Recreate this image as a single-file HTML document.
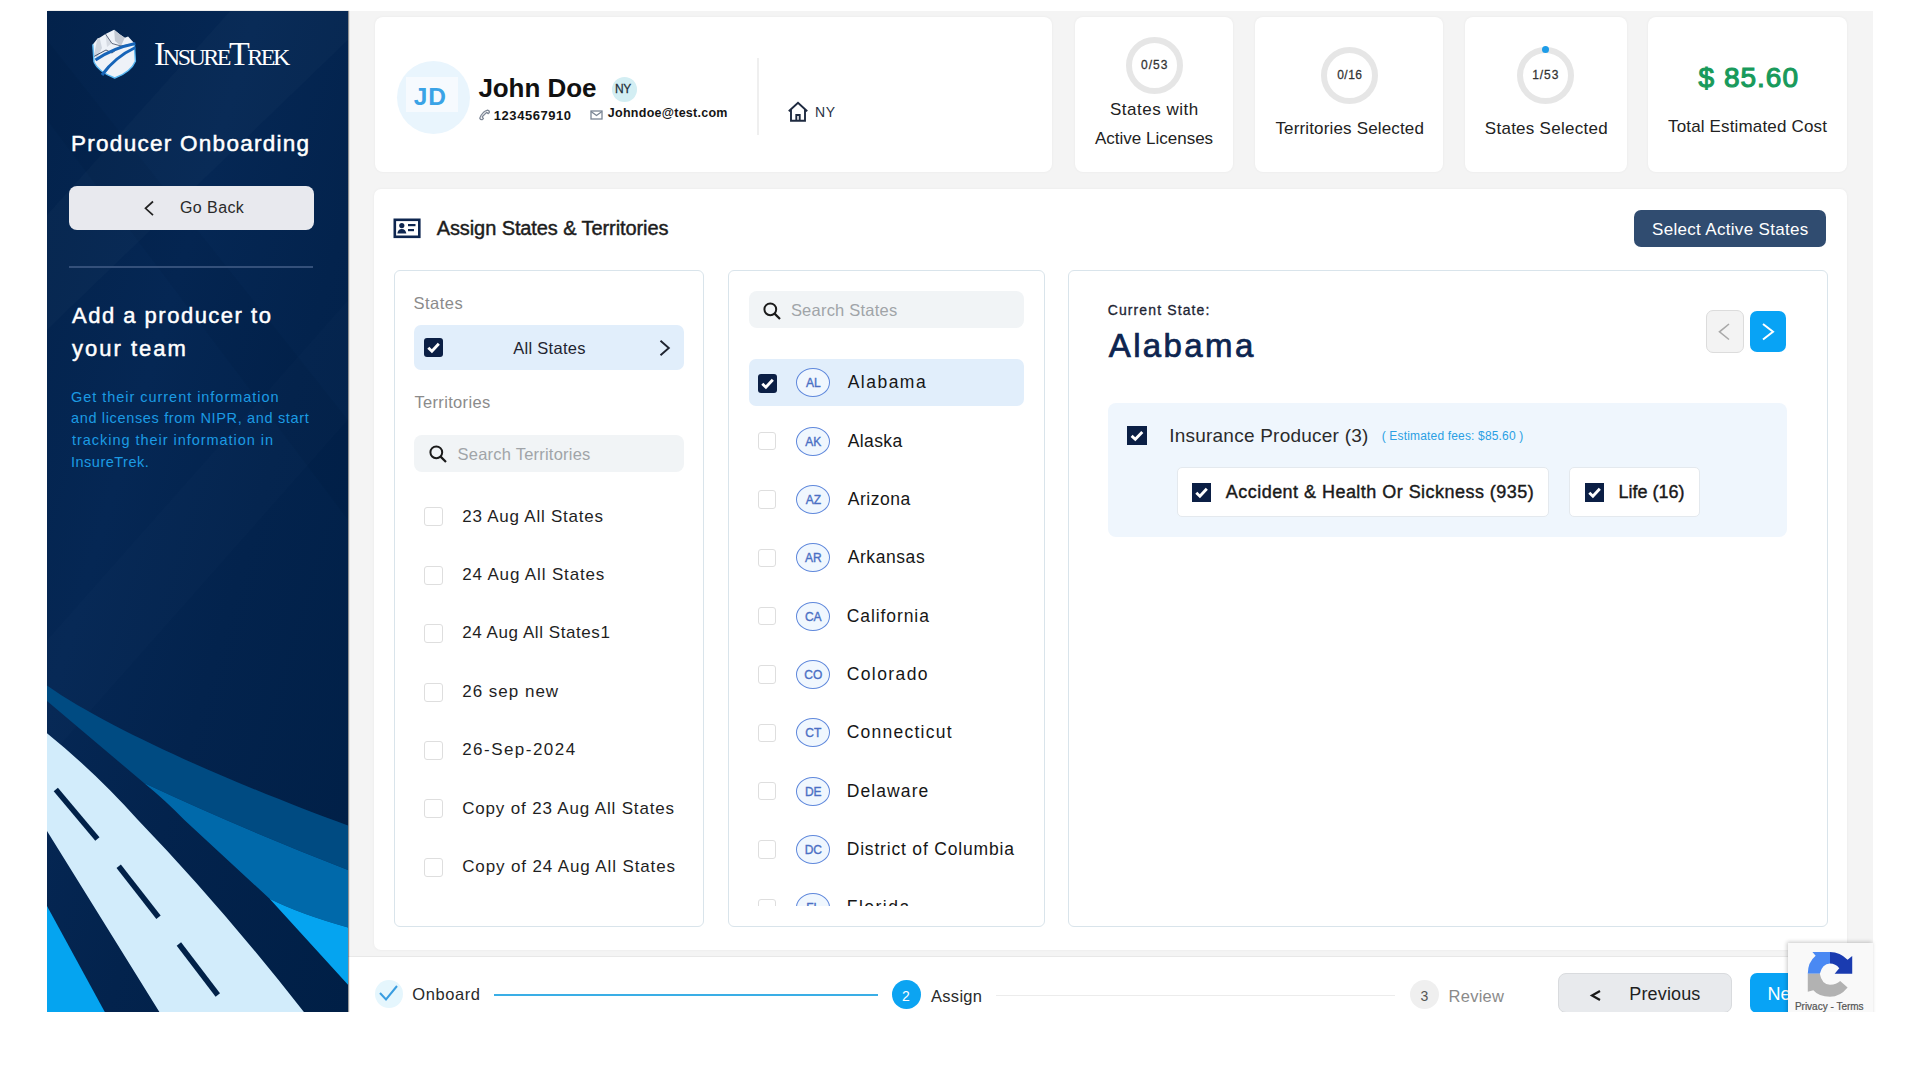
<!DOCTYPE html>
<html><head><meta charset="utf-8"><style>
*{box-sizing:border-box;margin:0;padding:0}
html,body{width:1920px;height:1080px;overflow:hidden;background:#fff;font-family:"Liberation Sans",sans-serif}
.abs{position:absolute}
.t{position:absolute;white-space:nowrap;line-height:1;font-family:"Liberation Sans",sans-serif}
#side{position:absolute;left:47px;top:11px;width:301px;height:1001px;background:#03234c;overflow:hidden;box-shadow:1px 0 1px rgba(0,0,0,0.4)}
#main{position:absolute;left:348px;top:11px;width:1525px;height:945px;background:#f4f4f4}
#foot{position:absolute;left:348px;top:956px;width:1525px;height:56px;background:#fff;border-top:1px solid #e8e8e8}
.card{position:absolute;background:#fff;border-radius:8px;box-shadow:0 0 3px rgba(0,0,0,0.05)}
.panel{position:absolute;background:#fff;border:1.5px solid #d9e4eb;border-radius:6px}
.cb{position:absolute;width:19px;height:19px;border:1.5px solid #dedede;border-radius:3px;background:#fff}
.cbk{position:absolute;width:19px;height:19px;border-radius:3px;background:#0b1f45}
.cbk svg{position:absolute;left:0;top:0}
.badge{position:absolute;width:34px;height:34px;border:1.2px solid #5f88dc;border-radius:50%;background:#f0f7fe;color:#4a6fc4;font-size:12px;font-weight:400;-webkit-text-stroke:0.35px #4a6fc4;text-align:center;line-height:31px;font-family:"Liberation Sans",sans-serif}
.row-sel{position:absolute;background:#e1eefb;border-radius:7px}
.search{position:absolute;background:#f1f4f6;border-radius:8px}
.ring{position:absolute;border-radius:50%;border:6px solid #e6e6e6}

</style></head><body>
<div id="main"></div>
<div id="foot"></div>
<div id="side">
  <svg class="abs" style="left:0;top:0" width="301" height="1001" viewBox="47 11 301 1001">
    <defs>
      <linearGradient id="sg" x1="0" y1="0" x2="1" y2="1">
        <stop offset="0" stop-color="#03224b"/>
        <stop offset="0.35" stop-color="#052754"/>
        <stop offset="0.6" stop-color="#03234d"/>
        <stop offset="1" stop-color="#001f46"/>
      </linearGradient>
    </defs>
    <rect x="47" y="11" width="301" height="1001" fill="url(#sg)"/>
    <path d="M230 11 L348 11 L348 40 L47 330 L47 215 Z" fill="#ffffff" opacity="0.018"/>
    <path d="M47 120 L47 40 L348 420 L348 520 Z" fill="#000000" opacity="0.03"/>
    <path d="M348 300 L348 420 L47 760 L47 640 Z" fill="#ffffff" opacity="0.012"/>
    
    
    <!-- band A -->
    <path d="M47 685.6 C117 735 258 792.6 348 825.6 L348 870 Q240 828 144 783 L47 701 Z" fill="#004b82"/>
    <!-- band B -->
    <path d="M144 783 Q240 828 348 870 L348 927.4 Q300 914 269.6 898.7 L184.4 820 Q165 800 144 783 Z" fill="#0069aa"/>
    <!-- band C -->
    <path d="M269.6 898.7 Q300 914 348 927.4 L348 984.8 Z" fill="#05a4f0"/>
    <!-- bottom-left bright triangle -->
    <path d="M47 906 L104.8 1012 L47 1012 Z" fill="#05a4f0"/>
    <!-- light road -->
    <path d="M47 733.3 Q95 772 138 820 Q220 905 303.9 1012 L159.4 1012 L47 831 Z" fill="#d2ecfb"/>
    <!-- dashes -->
    <g stroke="#012148" stroke-width="5.5">
      <line x1="55.8" y1="789.5" x2="97.4" y2="839"/>
      <line x1="118.7" y1="866.3" x2="158.5" y2="917.2"/>
      <line x1="178.9" y1="944" x2="217.8" y2="995"/>
    </g>
  </svg>
  <!-- logo -->
  <svg class="abs" style="left:38px;top:11px" width="60" height="60" viewBox="0 0 60 60">
    <path d="M7.8 22.4 L12.3 16.8 L14.6 15.7 L20.5 12 L29.1 7.8 L35 12.5 L39.8 15.7 L43.1 14.6 L49.3 21.3 L50.4 39.2 Q46 50 29.7 56 Q13.5 50 9 40.3 Z" fill="#eef2f8"/>
    <path d="M29.1 7.8 L35 12.5 L39.8 15.7 L36 24 L30 19 Z" fill="#c3c9d3"/>
    <path d="M12.3 16.8 L14.6 15.7 L17 26 L12 36 L9 33 Z" fill="#cfd5de"/>
    <path d="M20.5 12 L24 17 L27 21 L22 25 Z" fill="#d6dbe3"/>
    <path d="M8 35 L21 28 L27 31 L36 24 L49 22" fill="none" stroke="#26344f" stroke-width="0.8"/>
    <path d="M20.5 12 L27 21.5 L36 24" fill="none" stroke="#26344f" stroke-width="0.7"/>
    <path d="M9 40.3 Q13.5 50 29.7 56 Q46 50 50.4 39.2 L49.3 21.3" fill="none" stroke="#5ab8f2" stroke-width="1.4"/>
    <path d="M7.8 22.4 L9 40.3" fill="none" stroke="#5ab8f2" stroke-width="1.4"/>
    <path d="M10.5 38 Q28 26 50.4 21.5" fill="none" stroke="#1664b8" stroke-width="3"/>
    <path d="M17 53 Q30 35 50.4 25.5" fill="none" stroke="#1664b8" stroke-width="3"/>
  </svg>
  <div class="abs" style="left:107px;top:26px;font-family:'Liberation Serif',serif;font-size:34px;line-height:1;color:#fff;font-variant:small-caps;letter-spacing:-2.5px;font-weight:400;white-space:nowrap">InsureTrek</div>
  <!-- go back -->
  <div class="abs" style="left:22px;top:175px;width:245px;height:44px;background:#e8e9ee;border-radius:8px"></div>
  <svg class="abs" style="left:96px;top:189px" width="12" height="17" viewBox="0 0 12 17"><path d="M10 1.5 L2.5 8.3 L10 15.2" fill="none" stroke="#222" stroke-width="1.7"/></svg>
  <div class="abs" style="left:22px;top:255px;width:244px;height:1.5px;background:#34507a"></div>
</div>

<!-- header cards -->
<div class="card" style="left:375px;top:17px;width:677px;height:155px"></div>
<div class="card" style="left:1075px;top:17px;width:158px;height:155px"></div>
<div class="card" style="left:1255px;top:17px;width:188px;height:155px"></div>
<div class="card" style="left:1465px;top:17px;width:161.5px;height:155px"></div>
<div class="card" style="left:1647.5px;top:17px;width:199.5px;height:155px"></div>
<!-- avatar -->
<div class="abs" style="left:397px;top:61px;width:73px;height:73px;border-radius:50%;background:#e9f5fd"></div>
<div class="abs" style="left:406px;top:77px;width:51.5px;height:35px;background:#f6fafe"></div>
<div class="abs" style="left:611.5px;top:77px;width:25.5px;height:25px;border-radius:50%;background:#d3eef3"></div>
<!-- phone icon -->
<svg class="abs" style="left:478px;top:109px" width="13" height="13" viewBox="0 0 13 13"><path d="M9.6 1.2 Q11.6 1.6 11.3 3.6 L10.3 4.6 L8.6 3.4 L4.2 7.8 L5.4 9.5 L4.3 10.6 Q2.4 10.9 1.8 9.2 Q2.6 6.2 5.3 3.6 Q7.4 1.7 9.6 1.2 Z" fill="none" stroke="#7d8796" stroke-width="1.3" stroke-linejoin="round"/></svg>
<!-- mail icon -->
<svg class="abs" style="left:590px;top:110px" width="13" height="10" viewBox="0 0 13 10"><rect x="1" y="1" width="11" height="8" fill="none" stroke="#7a8594" stroke-width="1.3"/><path d="M1 1.5 L6.5 5.5 L12 1.5" fill="none" stroke="#7a8594" stroke-width="1.3"/></svg>
<div class="abs" style="left:757px;top:58px;width:1.5px;height:77px;background:#efefef"></div>
<!-- house icon -->
<svg class="abs" style="left:787px;top:101px" width="22" height="22" viewBox="0 0 22 22"><path d="M1.8 10.3 L11 1.8 L20.2 10.3 M4 8.5 V19.8 H18 V8.5 M9.3 19.8 V14 H12.7 V19.8" fill="none" stroke="#1e2a40" stroke-width="1.9" stroke-linejoin="miter"/></svg>
<!-- rings -->
<div class="ring" style="left:1125.8px;top:36.8px;width:57px;height:57px"></div>
<div class="ring" style="left:1320.7px;top:46.7px;width:57px;height:57px"></div>
<div class="ring" style="left:1517.2px;top:46.6px;width:57px;height:57px"></div>
<div class="abs" style="left:1542.3px;top:45.7px;width:7px;height:7px;border-radius:50%;background:#1d9ce8"></div>

<!-- big card -->
<div class="card" style="left:373.5px;top:189px;width:1473.5px;height:761px;border-radius:7px"></div>
<svg class="abs" style="left:393px;top:218px" width="29" height="22" viewBox="0 0 29 22"><rect x="1.8" y="1.8" width="24.5" height="17" fill="none" stroke="#0e2650" stroke-width="2.6"/><circle cx="8.8" cy="7.6" r="2.6" fill="#0e2650"/><path d="M4.3 15.6 Q4.8 10.9 8.8 10.9 Q12.8 10.9 13.3 15.6 Z" fill="#0e2650"/><rect x="15" y="6" width="7.5" height="2.2" fill="#0e2650"/><rect x="15" y="11" width="6" height="2.2" fill="#0e2650"/></svg>
<div class="abs" style="left:1634px;top:210px;width:192px;height:37px;background:#304c70;border-radius:7px"></div>

<!-- panels -->
<div class="panel" style="left:394px;top:270px;width:310px;height:657px"></div>
<div class="panel" style="left:727.5px;top:270px;width:317px;height:657px"></div>
<div class="panel" style="left:1068px;top:270px;width:759.5px;height:657px"></div>

<!-- panel1 -->
<div class="row-sel" style="left:414.4px;top:325px;width:269.2px;height:45px"></div>
<div class="cbk" style="left:424px;top:338px"><svg width="19" height="19" viewBox="0 0 19 19"><path d="M4.3 9.8 L7.9 13.2 L14.8 5.8" fill="none" stroke="#fff" stroke-width="2.9"/></svg></div>
<svg class="abs" style="left:657px;top:339px" width="16" height="18" viewBox="0 0 16 18"><path d="M3.5 1.8 L11.8 9 L3.5 16.2" fill="none" stroke="#1f2430" stroke-width="1.9"/></svg>
<div class="search" style="left:414.4px;top:435px;width:269.2px;height:37px"></div>
<svg class="abs" style="left:428px;top:444px" width="20" height="20" viewBox="0 0 20 20"><circle cx="8.3" cy="8.3" r="5.9" fill="none" stroke="#1a1a1a" stroke-width="2"/><path d="M12.6 12.6 L18 18" stroke="#1a1a1a" stroke-width="2.2"/></svg>
<div class="cb" style="left:424px;top:507.4px"></div>
<div class="cb" style="left:424px;top:565.8px"></div>
<div class="cb" style="left:424px;top:624.2px"></div>
<div class="cb" style="left:424px;top:682.6px"></div>
<div class="cb" style="left:424px;top:741px"></div>
<div class="cb" style="left:424px;top:799.4px"></div>
<div class="cb" style="left:424px;top:857.8px"></div>

<!-- panel2 -->
<div class="search" style="left:748.8px;top:291.4px;width:275.2px;height:37px"></div>
<svg class="abs" style="left:762px;top:300.5px" width="20" height="20" viewBox="0 0 20 20"><circle cx="8.3" cy="8.3" r="5.9" fill="none" stroke="#1a1a1a" stroke-width="2"/><path d="M12.6 12.6 L18 18" stroke="#1a1a1a" stroke-width="2.2"/></svg>
<div class="row-sel" style="left:748.8px;top:359.2px;width:275.2px;height:46.6px"></div>
<div class="abs" style="left:740px;top:340px;width:300px;height:566px;overflow:hidden" id="slist">
<div class="cbk" style="left:17.8px;top:33.5px"><svg width="19" height="19" viewBox="0 0 19 19"><path d="M4.3 9.8 L7.9 13.2 L14.8 5.8" fill="none" stroke="#fff" stroke-width="2.9"/></svg></div>
<div class="badge" style="left:56.3px;top:28.2px;width:34px;height:29px;line-height:28.5px">AL</div>
<div class="cb" style="left:17.8px;top:91.9px;width:18.5px;height:18.5px"></div>
<div class="badge" style="left:56.3px;top:86.6px;width:34px;height:29px;line-height:28.5px">AK</div>
<div class="cb" style="left:17.8px;top:150.2px;width:18.5px;height:18.5px"></div>
<div class="badge" style="left:56.3px;top:144.9px;width:34px;height:29px;line-height:28.5px">AZ</div>
<div class="cb" style="left:17.8px;top:208.5px;width:18.5px;height:18.5px"></div>
<div class="badge" style="left:56.3px;top:203.2px;width:34px;height:29px;line-height:28.5px">AR</div>
<div class="cb" style="left:17.8px;top:266.9px;width:18.5px;height:18.5px"></div>
<div class="badge" style="left:56.3px;top:261.6px;width:34px;height:29px;line-height:28.5px">CA</div>
<div class="cb" style="left:17.8px;top:325.2px;width:18.5px;height:18.5px"></div>
<div class="badge" style="left:56.3px;top:320.0px;width:34px;height:29px;line-height:28.5px">CO</div>
<div class="cb" style="left:17.8px;top:383.6px;width:18.5px;height:18.5px"></div>
<div class="badge" style="left:56.3px;top:378.3px;width:34px;height:29px;line-height:28.5px">CT</div>
<div class="cb" style="left:17.8px;top:441.9px;width:18.5px;height:18.5px"></div>
<div class="badge" style="left:56.3px;top:436.6px;width:34px;height:29px;line-height:28.5px">DE</div>
<div class="cb" style="left:17.8px;top:500.3px;width:18.5px;height:18.5px"></div>
<div class="badge" style="left:56.3px;top:495.0px;width:34px;height:29px;line-height:28.5px">DC</div>
<div class="cb" style="left:17.8px;top:558.6px;width:18.5px;height:18.5px"></div>
<div class="badge" style="left:56.3px;top:553.3px;width:34px;height:29px;line-height:28.5px">FL</div>
</div>

<!-- panel3 -->
<div class="abs" style="left:1705.6px;top:310px;width:38px;height:43px;background:#f3f3f3;border:1.2px solid #dcdcdc;border-radius:7px"></div>
<svg class="abs" style="left:1716px;top:322px" width="16" height="20" viewBox="0 0 16 20"><path d="M13 2 L3.5 9.8 L13 17.5" fill="none" stroke="#a9a9a9" stroke-width="1.6"/></svg>
<div class="abs" style="left:1749.6px;top:311px;width:36.4px;height:41.2px;background:#08a3f5;border-radius:7px"></div>
<svg class="abs" style="left:1760px;top:322px" width="16" height="20" viewBox="0 0 16 20"><path d="M3 2 L13 9.8 L3 17.5" fill="none" stroke="#fff" stroke-width="2"/></svg>
<div class="abs" style="left:1108.4px;top:403.4px;width:678.8px;height:133.3px;background:#eff6fd;border-radius:8px"></div>
<div class="cbk" style="left:1126.8px;top:425.7px;width:20px;height:19.2px;border-radius:0"><svg width="20" height="19" viewBox="0 0 20 19"><path d="M4.6 9.9 L8.3 13.3 L15.3 5.9" fill="none" stroke="#fff" stroke-width="2.9"/></svg></div>
<div class="abs" style="left:1176.7px;top:467.4px;width:372.5px;height:49.8px;background:#fff;border:1.2px solid #e4e9ee;border-radius:5px"></div>
<div class="cbk" style="left:1191.5px;top:483px;width:19.2px;height:18.6px;border-radius:0"><svg width="19" height="19" viewBox="0 0 19 19"><path d="M4.3 9.8 L7.9 13.2 L14.8 5.8" fill="none" stroke="#fff" stroke-width="2.9"/></svg></div>
<div class="abs" style="left:1569.4px;top:467.2px;width:130.3px;height:50px;background:#fff;border:1.2px solid #e4e9ee;border-radius:5px"></div>
<div class="cbk" style="left:1584.7px;top:482.8px;width:19.5px;height:19.2px;border-radius:0"><svg width="19" height="19" viewBox="0 0 19 19"><path d="M4.3 9.8 L7.9 13.2 L14.8 5.8" fill="none" stroke="#fff" stroke-width="2.9"/></svg></div>

<!-- footer -->
<div class="abs" style="left:374.6px;top:980px;width:28px;height:28px;border-radius:50%;background:#e5f6fd"></div>
<svg class="abs" style="left:378px;top:984px" width="21" height="18" viewBox="0 0 21 18"><path d="M2 9 L8 15.5 L19 2" fill="none" stroke="#3a9de0" stroke-width="2"/></svg>
<div class="abs" style="left:494px;top:994px;width:384px;height:2px;background:#3aaee6"></div>
<div class="abs" style="left:892px;top:980.2px;width:29px;height:29px;border-radius:50%;background:#0ca4f2"></div>
<div class="abs" style="left:996px;top:994.5px;width:399px;height:1.5px;background:#ececec"></div>
<div class="abs" style="left:1410px;top:980.2px;width:29px;height:29px;border-radius:50%;background:#efefef"></div>
<div class="abs" style="left:1558px;top:973px;width:173.6px;height:39.5px;background:#e8eaed;border:1.2px solid #d9dbde;border-radius:8px"></div>
<svg class="abs" style="left:1589px;top:988px" width="14" height="14" viewBox="0 0 14 14"><path d="M11 3 L3 7.5 L11 12" fill="none" stroke="#1a1a1a" stroke-width="2.2"/></svg>
<div class="abs" style="left:1750px;top:973px;width:120px;height:39.5px;background:#08a3f5;border-radius:7px"></div>
<div class="abs" style="left:745px;top:906px;width:290px;height:17px;background:#fff;z-index:5"></div>
<!-- recaptcha -->
<div style="position:absolute;left:0;top:0;z-index:10">
<div class="abs" style="left:1788px;top:943px;width:85px;height:75px;background:#f9f9f9;box-shadow:-1px -1px 4px rgba(0,0,0,0.22)"></div>
<svg class="abs" style="left:1780px;top:920px" width="100" height="100" viewBox="0 0 1080 1080">
  <path d="M300 580 Q300 455 385 385 L350 345 L540 345 L540 470 Q455 475 430 580 Z" fill="#4a89f3"/>
  <path d="M540 345 Q650 345 730 430 L780 390 L780 580 L590 580 L640 520 Q600 470 540 470 Z" fill="#1a3bb0"/>
  <path d="M300 580 L430 580 Q450 695 540 700 Q610 700 650 660 L730 730 Q650 830 540 830 Q420 830 360 760 L300 775 Z" fill="#b2b2b2"/>
</svg>
</div>
<!-- clip white below 1012 -->
<div class="abs" style="left:0;top:1012px;width:1920px;height:68px;background:#fff;z-index:20"></div>

<div class="t" id="po" style="left:71.00px;top:133.25px;font-size:22.50px;font-weight:400;color:#ffffff;letter-spacing:1.278px;-webkit-text-stroke:0.49px #ffffff;">Producer Onboarding</div>
<div class="t" id="gb" style="left:180.00px;top:199.96px;font-size:16.00px;font-weight:400;color:#2a2a2a;letter-spacing:0.417px;">Go Back</div>
<div class="t" id="ad1" style="left:72.00px;top:305.13px;font-size:22.00px;font-weight:400;color:#ffffff;letter-spacing:1.500px;-webkit-text-stroke:0.48px #ffffff;">Add a producer to</div>
<div class="t" id="ad2" style="left:72.00px;top:337.98px;font-size:22.00px;font-weight:400;color:#ffffff;letter-spacing:2.000px;-webkit-text-stroke:0.48px #ffffff;">your team</div>
<div class="t" id="p1" style="left:71.00px;top:390.33px;font-size:14.50px;font-weight:400;color:#1c9be3;letter-spacing:0.964px;">Get their current information</div>
<div class="t" id="p2" style="left:71.00px;top:411.43px;font-size:14.50px;font-weight:400;color:#1c9be3;letter-spacing:0.656px;">and licenses from NIPR, and start</div>
<div class="t" id="p3" style="left:72.00px;top:433.33px;font-size:14.50px;font-weight:400;color:#1c9be3;letter-spacing:0.964px;">tracking their information in</div>
<div class="t" id="p4" style="left:71.00px;top:454.93px;font-size:14.50px;font-weight:400;color:#1c9be3;letter-spacing:0.500px;">InsureTrek.</div>
<div class="t" id="jd" style="left:413.70px;top:84.86px;font-size:24.50px;font-weight:700;color:#3aa3e6;letter-spacing:1.000px;">JD</div>
<div class="t" id="jn" style="left:478.40px;top:75.39px;font-size:26.00px;font-weight:700;color:#111111;letter-spacing:-0.057px;">John Doe</div>
<div class="t" id="nyb" style="left:615.00px;top:82.64px;font-size:12.00px;font-weight:400;color:#1f2f3a;letter-spacing:-0.500px;-webkit-text-stroke:0.26px #1f2f3a;">NY</div>
<div class="t" id="ph" style="left:493.80px;top:108.80px;font-size:13.00px;font-weight:700;color:#151515;letter-spacing:0.556px;">1234567910</div>
<div class="t" id="em" style="left:607.80px;top:107.22px;font-size:12.50px;font-weight:700;color:#151515;letter-spacing:0.267px;">Johndoe@test.com</div>
<div class="t" id="ny2" style="left:815.00px;top:104.85px;font-size:14.00px;font-weight:400;color:#2a3346;letter-spacing:0.600px;">NY</div>
<div class="t" id="c1n" style="left:1141.00px;top:59.24px;font-size:12.00px;font-weight:400;color:#333333;letter-spacing:1.000px;-webkit-text-stroke:0.26px #333333;">0/53</div>
<div class="t" id="c1a" style="left:1110.00px;top:101.31px;font-size:17.00px;font-weight:400;color:#222222;letter-spacing:0.500px;">States with</div>
<div class="t" id="c1b" style="left:1095.00px;top:129.81px;font-size:17.00px;font-weight:400;color:#222222;letter-spacing:0.000px;">Active Licenses</div>
<div class="t" id="c2n" style="left:1337.20px;top:69.04px;font-size:12.00px;font-weight:400;color:#333333;letter-spacing:0.500px;-webkit-text-stroke:0.26px #333333;">0/16</div>
<div class="t" id="c2a" style="left:1275.40px;top:120.41px;font-size:17.00px;font-weight:400;color:#222222;letter-spacing:0.158px;">Territories Selected</div>
<div class="t" id="c3n" style="left:1532.30px;top:69.34px;font-size:12.00px;font-weight:400;color:#333333;letter-spacing:0.900px;-webkit-text-stroke:0.26px #333333;">1/53</div>
<div class="t" id="c3a" style="left:1484.80px;top:119.61px;font-size:17.00px;font-weight:400;color:#222222;letter-spacing:0.271px;">States Selected</div>
<div class="t" id="c4n" style="left:1698.60px;top:63.70px;font-size:28.00px;font-weight:400;color:#189a5b;letter-spacing:1.000px;-webkit-text-stroke:1.12px #189a5b;">$ 85.60</div>
<div class="t" id="c4a" style="left:1668.00px;top:117.61px;font-size:17.00px;font-weight:400;color:#222222;letter-spacing:0.158px;">Total Estimated Cost</div>
<div class="t" id="ash" style="left:436.70px;top:218.37px;font-size:20.00px;font-weight:400;color:#1d1d1d;letter-spacing:-0.092px;-webkit-text-stroke:0.44px #1d1d1d;">Assign States &amp; Territories</div>
<div class="t" id="sas" style="left:1652.00px;top:220.61px;font-size:17.00px;font-weight:400;color:#ffffff;letter-spacing:0.316px;">Select Active States</div>
<div class="t" id="st" style="left:413.40px;top:294.63px;font-size:16.50px;font-weight:400;color:#8b8b8b;letter-spacing:0.520px;">States</div>
<div class="t" id="als" style="left:513.30px;top:339.78px;font-size:16.50px;font-weight:400;color:#1f2430;letter-spacing:0.278px;">All States</div>
<div class="t" id="ter" style="left:414.40px;top:394.43px;font-size:16.50px;font-weight:400;color:#8b8b8b;letter-spacing:0.340px;">Territories</div>
<div class="t" id="sts" style="left:457.60px;top:445.53px;font-size:16.50px;font-weight:400;color:#a0a4a8;letter-spacing:0.218px;">Search Territories</div>
<div class="t" id="tr0" style="left:462.20px;top:507.61px;font-size:17.00px;font-weight:400;color:#1f1f1f;letter-spacing:0.769px;">23 Aug All States</div>
<div class="t" id="tr1" style="left:462.20px;top:566.01px;font-size:17.00px;font-weight:400;color:#1f1f1f;letter-spacing:0.850px;">24 Aug All States</div>
<div class="t" id="tr2" style="left:462.20px;top:624.41px;font-size:17.00px;font-weight:400;color:#1f1f1f;letter-spacing:0.571px;">24 Aug All States1</div>
<div class="t" id="tr3" style="left:462.20px;top:682.81px;font-size:17.00px;font-weight:400;color:#1f1f1f;letter-spacing:1.000px;">26 sep new</div>
<div class="t" id="tr4" style="left:462.20px;top:741.21px;font-size:17.00px;font-weight:400;color:#1f1f1f;letter-spacing:1.460px;">26-Sep-2024</div>
<div class="t" id="tr5" style="left:462.20px;top:799.61px;font-size:17.00px;font-weight:400;color:#1f1f1f;letter-spacing:0.833px;">Copy of 23 Aug All States</div>
<div class="t" id="tr6" style="left:462.20px;top:858.01px;font-size:17.00px;font-weight:400;color:#1f1f1f;letter-spacing:0.875px;">Copy of 24 Aug All States</div>
<div class="t" id="ss" style="left:790.90px;top:302.03px;font-size:16.50px;font-weight:400;color:#a0a4a8;letter-spacing:0.225px;">Search States</div>
<div class="t" id="sn0" style="left:847.70px;top:374.19px;font-size:17.50px;font-weight:400;color:#161616;letter-spacing:1.483px;">Alabama</div>
<div class="t" id="sn1" style="left:847.70px;top:432.54px;font-size:17.50px;font-weight:400;color:#161616;letter-spacing:0.400px;">Alaska</div>
<div class="t" id="sn2" style="left:847.70px;top:490.89px;font-size:17.50px;font-weight:400;color:#161616;letter-spacing:0.533px;">Arizona</div>
<div class="t" id="sn3" style="left:847.70px;top:549.24px;font-size:17.50px;font-weight:400;color:#161616;letter-spacing:0.571px;">Arkansas</div>
<div class="t" id="sn4" style="left:846.70px;top:607.59px;font-size:17.50px;font-weight:400;color:#161616;letter-spacing:0.922px;">California</div>
<div class="t" id="sn5" style="left:846.70px;top:665.94px;font-size:17.50px;font-weight:400;color:#161616;letter-spacing:1.400px;">Colorado</div>
<div class="t" id="sn6" style="left:846.70px;top:724.29px;font-size:17.50px;font-weight:400;color:#161616;letter-spacing:1.250px;">Connecticut</div>
<div class="t" id="sn7" style="left:846.70px;top:782.64px;font-size:17.50px;font-weight:400;color:#161616;letter-spacing:1.100px;">Delaware</div>
<div class="t" id="sn8" style="left:846.70px;top:840.99px;font-size:17.50px;font-weight:400;color:#161616;letter-spacing:0.816px;">District of Columbia</div>
<div class="t" id="sn9" style="left:846.70px;top:899.34px;font-size:17.50px;font-weight:400;color:#161616;letter-spacing:1.500px;">Florida</div>
<div class="t" id="cs" style="left:1107.70px;top:302.95px;font-size:14.00px;font-weight:400;color:#1d2433;letter-spacing:1.115px;-webkit-text-stroke:0.31px #1d2433;">Current State:</div>
<div class="t" id="cal" style="left:1108.75px;top:328.77px;font-size:33.00px;font-weight:400;color:#0d2550;letter-spacing:2.375px;-webkit-text-stroke:0.73px #0d2550;">Alabama</div>
<div class="t" id="ip" style="left:1169.20px;top:425.62px;font-size:19.00px;font-weight:400;color:#2b2b2b;letter-spacing:0.229px;">Insurance Producer (3)</div>
<div class="t" id="ef" style="left:1381.70px;top:429.84px;font-size:12.00px;font-weight:400;color:#2a9fe3;letter-spacing:0.168px;">( Estimated fees: $85.60 )</div>
<div class="t" id="ah" style="left:1225.80px;top:482.76px;font-size:18.00px;font-weight:400;color:#1a1a1a;letter-spacing:0.465px;-webkit-text-stroke:0.40px #1a1a1a;">Accident &amp; Health Or Sickness (935)</div>
<div class="t" id="lf" style="left:1618.40px;top:482.56px;font-size:18.00px;font-weight:400;color:#1a1a1a;letter-spacing:0.000px;-webkit-text-stroke:0.40px #1a1a1a;">Life (16)</div>
<div class="t" id="ob" style="left:412.30px;top:986.43px;font-size:16.50px;font-weight:400;color:#2a2a2a;letter-spacing:0.583px;">Onboard</div>
<div class="t" id="s2" style="left:902.00px;top:988.65px;font-size:14.00px;font-weight:400;color:#ffffff;letter-spacing:0.000px;">2</div>
<div class="t" id="asg" style="left:931.00px;top:987.83px;font-size:16.50px;font-weight:400;color:#2a2a2a;letter-spacing:0.300px;">Assign</div>
<div class="t" id="s3" style="left:1420.50px;top:988.65px;font-size:14.00px;font-weight:400;color:#555555;letter-spacing:0.000px;">3</div>
<div class="t" id="rv" style="left:1448.60px;top:987.83px;font-size:16.50px;font-weight:400;color:#8a8a8a;letter-spacing:0.240px;">Review</div>
<div class="t" id="prv" style="left:1629.30px;top:984.76px;font-size:18.00px;font-weight:400;color:#1f1f1f;letter-spacing:0.143px;">Previous</div>
<div class="t" id="nx" style="left:1767.40px;top:984.76px;font-size:18.00px;font-weight:400;color:#ffffff;letter-spacing:0.000px;">Next</div>
<div class="t" id="pt" style="left:1794.90px;top:1002.03px;font-size:10.00px;font-weight:400;color:#555555;letter-spacing:0.000px;-webkit-text-stroke:0.22px #555555;z-index:12;">Privacy - Terms</div>
</body></html>
